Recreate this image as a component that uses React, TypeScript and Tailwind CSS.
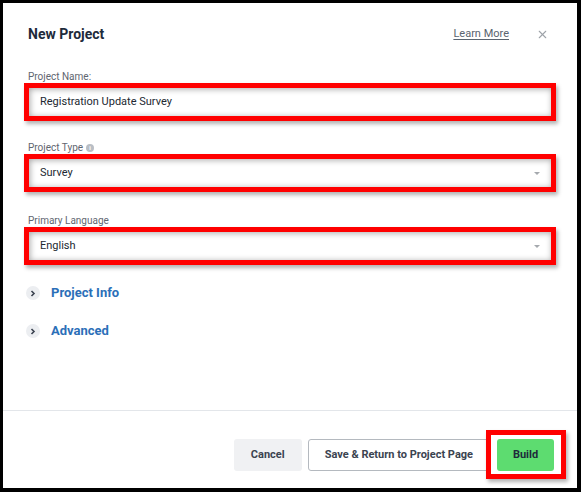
import { X } from 'lucide-react';

const FONT = { fontFamily: 'Roboto, "Liberation Sans", sans-serif' };

function Field({ label, value, select, info, className }: { label: string; value: string; select?: boolean; info?: boolean; className?: string }) {
  return (
    <div className={className}>
      <div className="h-[11px] pl-[4px] flex items-center gap-[3px] text-[10px] leading-[11px] text-[#5f6670]">
        <span>{label}</span>
        {info && (
          <span className="w-[8px] h-[8px] rounded-full bg-[#b9bec5] text-white text-[6px] leading-[8px] font-bold flex items-center justify-center">
            i
          </span>
        )}
      </div>
      <div className="mt-[1px] h-[38px] border-[5px] border-[#ff0000] shadow-[2px_3px_4px_rgba(0,0,0,0.3)]">
        <div className="h-full bg-white shadow-[inset_1px_1px_6px_rgba(0,0,0,0.35)] flex items-center justify-between pl-[11px] pr-[11px]">
          <span className="text-[11px] text-[#222831]">{value}</span>
          {select && (
            <span className="w-0 h-0 border-l-[3px] border-r-[3px] border-t-[3px] border-l-transparent border-r-transparent border-t-[#a5a9ae]" />
          )}
        </div>
      </div>
    </div>
  );
}

function Section({ title, className }: { title: string; className?: string }) {
  return (
    <div className={`h-[20px] flex items-center ${className ?? ''}`}>
      <span className="ml-[2px] w-[14px] h-[14px] rounded-full bg-[#eceef1] flex items-center justify-center">
        <svg width="6" height="7" viewBox="0 0 6 7">
          <path d="M1.5 1 L4 3.5 L1.5 6" fill="none" stroke="#3a4250" strokeWidth="1.6" />
        </svg>
      </span>
      <span className="ml-[11px] text-[13px] font-bold text-[#2b6fb8]">{title}</span>
    </div>
  );
}

export default function App() {
  return (
    <div className="w-[581px] h-[492px] bg-black pt-[3px] pl-[3px] pr-[4px] pb-[4px]" style={FONT}>
      <div className="w-full h-full bg-white flex flex-col">
        <div className="flex-1 flex flex-col">
          <div className="mt-[21px] h-[20px] flex items-center pl-[25px] pr-[28px]">
            <h1 className="text-[14px] font-bold text-[#1e2a3b]">New Project</h1>
            <span className="ml-auto text-[11px] text-[#5a6470] underline underline-offset-2">Learn More</span>
            <X size={13} strokeWidth={2} className="ml-[27px] text-[#9ea3a9]" />
          </div>

          <div className="px-[21px]">
            <Field className="mt-[27px]" label="Project Name:" value="Registration Update Survey" />
            <Field className="mt-[21px]" label="Project Type" value="Survey" select info />
            <Field className="mt-[23px]" label="Primary Language" value="English" select />
            <Section className="mt-[18px]" title="Project Info" />
            <Section className="mt-[18px]" title="Advanced" />
          </div>
        </div>

        <div className="h-[78px] border-t border-[#e3e6ea] flex items-start justify-end pt-[19px] pr-[11px]">
          <button className="mt-[9px] h-[32px] px-[17px] rounded-[3px] bg-[#f0f1f3] text-[11px] font-bold text-[#3b4350]">
            Cancel
          </button>
          <button className="mt-[9px] ml-[6px] h-[32px] px-[16px] rounded-[3px] border border-[#b4b9bf] bg-white text-[11px] font-bold text-[#3b4350]">
            Save &amp; Return to Project Page
          </button>
          <div className="relative z-10 -ml-[4px] h-[49px] w-[80px] border-[5px] border-[#ff0000] shadow-[2px_3px_4px_rgba(0,0,0,0.3)] pl-[6px] pt-[4px]">
            <button className="w-[57px] h-[32px] rounded-[3px] bg-[#5ddc70] text-[11px] font-bold text-[#1e2a3b]">
              Build
            </button>
          </div>
        </div>
      </div>
    </div>
  );
}
